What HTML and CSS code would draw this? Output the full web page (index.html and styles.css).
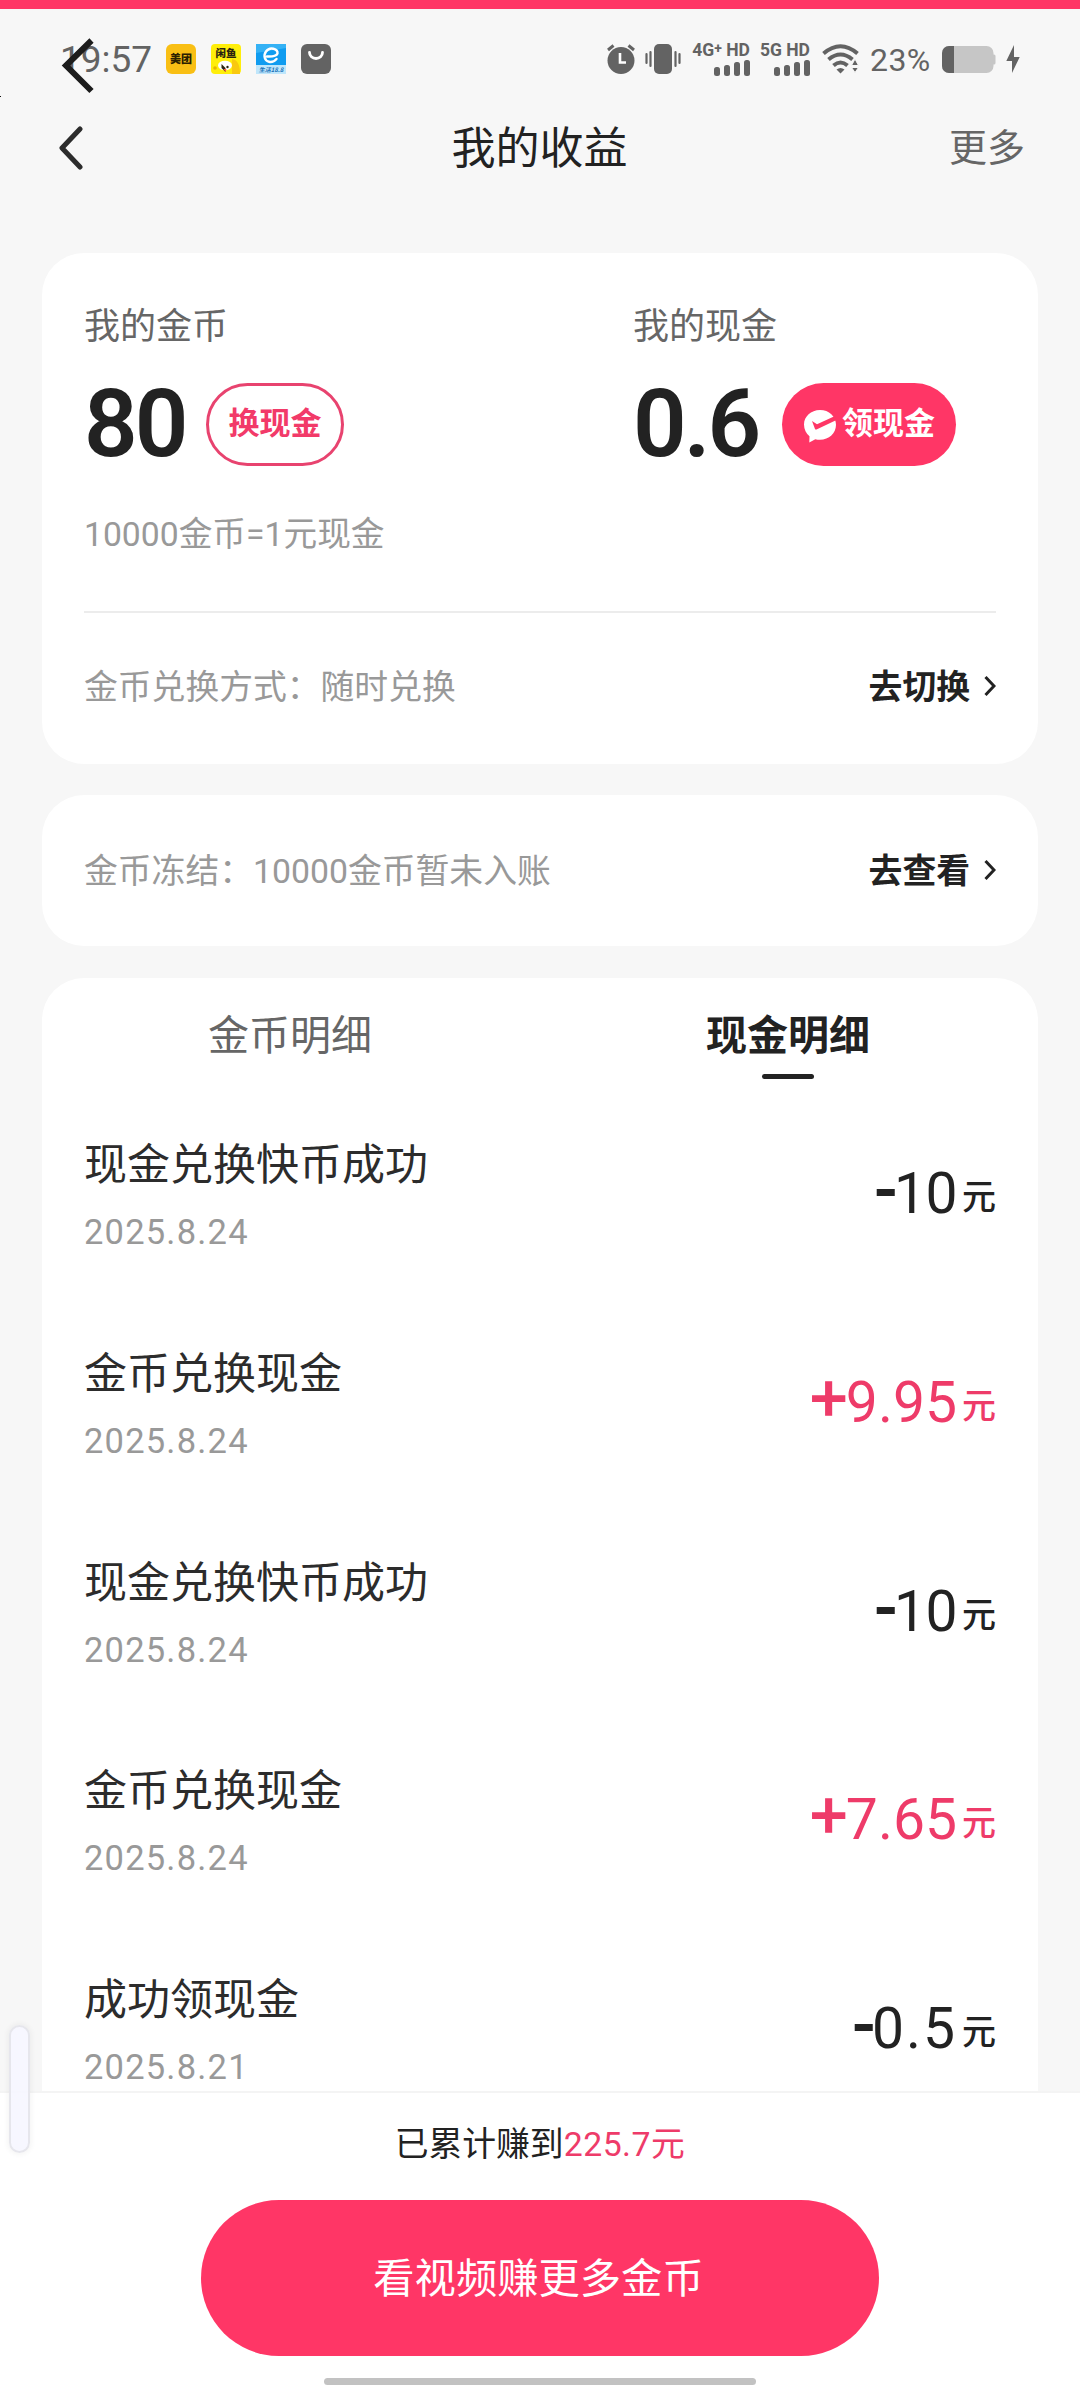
FILE: index.html
```html
<!DOCTYPE html>
<html lang="zh-CN">
<head>
<meta charset="utf-8">
<title>我的收益</title>
<link rel="stylesheet" href="styles.css">
</head>
<body>
<div class="screen">
  <div class="accent"></div>
  <div class="status">
    <span class="clock">19:57</span>
    <div class="apps">
      <svg width="30" height="30" viewBox="0 0 30 30"><rect width="30" height="30" rx="6" fill="#f9bf14"/><text x="15" y="19.2" text-anchor="middle" class="app-meituan">美团</text></svg>
      <svg width="30" height="30" viewBox="0 0 30 30"><rect width="30" height="30" rx="4" fill="#ffee0a"/><path d="M21 15q8 1 8 15h-8z" fill="#f9c90f"/><text x="15" y="12.5" text-anchor="middle" class="app-xianyu">闲鱼</text><ellipse cx="14" cy="21.500" rx="7" ry="4.800" fill="#fff"/><circle cx="4" cy="24" r="1.800" fill="#e8b500"/><path d="M10.500 20v4l4 4v-4z" fill="#2b2410"/><path d="M12.500 25l2 3 1-3z" fill="#ff5a3c"/><circle cx="16.500" cy="23" r="1.200" fill="#2b2410"/></svg>
      <svg width="30" height="30" viewBox="0 0 30 30"><rect width="30" height="30" fill="#109cf0"/><path d="M0 0h30v4L0 9z" fill="#35b2f5"/><rect y="21" width="30" height="9" fill="#bfe6fb"/><path d="M11 12.500q9 .5 10.500-3C22 5 14 2 10 7.500c-3 4.300-1.200 9.500 3 10.300 3 .6 5.500-.5 7.500-2.800" fill="none" stroke="#fff" stroke-width="2.400" stroke-linecap="round"/><text x="15" y="28" text-anchor="middle" class="app-eleme">生活18.8</text></svg>
      <svg width="30" height="30" viewBox="0 0 30 30"><rect width="30" height="30" rx="6" fill="#636363"/><path d="M8.500 8.500a6.500 6 0 0 0 13 0" fill="none" stroke="#fff" stroke-width="2.800" stroke-linecap="round"/></svg>
    </div>
    <div class="indicators">
      <svg class="ind-alarm" width="30" height="30" viewBox="0 0 30 30"><circle cx="15" cy="16.500" r="13.500" fill="#636363"/><path d="M2 6l5.500-4.500M22.500 1.500L28 6" stroke="#636363" stroke-width="3"/><path d="M14 9v9.500h6" fill="none" stroke="#fff" stroke-width="2.600"/></svg>
      <svg class="ind-vibrate" width="36" height="30" viewBox="0 0 36 30"><rect x="9" width="18" height="30" rx="5" fill="#636363"/><path d="M1.500 10v9M5.500 8v14M30.500 8v14M34.500 10v9" stroke="#636363" stroke-width="2.200" stroke-linecap="round"/></svg>
      <div class="signal sim-one"><span>4G<sup>+</sup> HD</span><i><b class="bar-1"></b><b class="bar-2"></b><b class="bar-3"></b><b class="bar-4"></b></i></div>
      <div class="signal sim-two"><span>5G HD</span><i><b class="bar-1"></b><b class="bar-2"></b><b class="bar-3"></b><b class="bar-4"></b></i></div>
      <svg class="ind-wifi" width="38" height="30" viewBox="0 0 38 30"><g fill="none" stroke="#636363" stroke-width="4"><path d="M1.500 9.500q17-14.500 34 0"/><path d="M6.500 15.500q12-10 24 0"/><path d="M11.500 21.500q7-6 14 0"/></g><path d="M14.500 25.500q4-3 8 0l-4 4z" fill="#636363"/><path d="M29.500 21.500l3.500-6.500 3.500 6.500zM29.500 23.500l3.500 5 3.500-5z" fill="#636363" stroke="#f7f7f7"/></svg>
      <span class="percent">23%</span>
      <svg class="ind-battery" width="54" height="27" viewBox="0 0 54 27"><rect x="50" y="8.500" width="3.500" height="10" rx="1.500" fill="#c6c6c6"/><rect width="51.500" height="27" rx="7" fill="#c6c6c6"/><path d="M12 0H7a7 7 0 0 0-7 7v13a7 7 0 0 0 7 7h5z" fill="#636363"/></svg>
      <svg class="ind-bolt" width="14" height="28" viewBox="0 0 14 28"><path d="M8 0L.3 16H6v12l7.700-16H8z" fill="#636363"/></svg>
    </div>
  </div>
  <header class="nav">
    <svg class="nav-back" width="28" height="44" viewBox="0 0 28 44"><path d="M23 3L5 22l18 19" fill="none" stroke="#2c2c2c" stroke-width="5" stroke-linecap="round" stroke-linejoin="round"/></svg>
    <h1>我的收益</h1>
    <a class="more">更多</a>
  </header>

  <main>
    <section class="card balance">
      <div class="columns">
        <div class="column">
          <div class="label">我的金币</div>
          <div class="figure"><span class="number">80</span><span class="pill outline">换现金</span></div>
        </div>
        <div class="column">
          <div class="label">我的现金</div>
          <div class="figure"><span class="number">0.6</span><span class="pill solid"><svg width="34" height="34" viewBox="0 0 34 34"><path d="M17 1C8 1 1 7.500 1 15.500c0 5 2.200 9 5.500 11.800L6.300 33.500l6-3.300c1.500.4 3 .6 4.700.6 9 0 16-6.500 16-15S26 1 17 1z" fill="#fff"/><path d="M9 12l5 3.200L32 7l1.500 4L13.500 20.500q-1 .4-1.500-.6z" fill="#ff3666"/></svg>领现金</span></div>
        </div>
      </div>
      <p class="rate">10000金币=1元现金</p>
      <div class="line-row method"><span>金币兑换方式：随时兑换</span><a>去切换<svg width="12" height="22" viewBox="0 0 12 22"><path d="M1.500 2l8.500 9-8.500 9" fill="none" stroke="#222" stroke-width="3"/></svg></a></div>
    </section>

    <section class="card line-row frozen"><span>金币冻结：10000金币暂未入账</span><a>去查看<svg width="12" height="22" viewBox="0 0 12 22"><path d="M1.500 2l8.500 9-8.500 9" fill="none" stroke="#222" stroke-width="3"/></svg></a></section>

    <section class="card details">
      <div class="tabs"><div class="tab">金币明细</div><div class="tab active">现金明细</div></div>
      <ul>
        <li><div><h2>现金兑换快币成功</h2><time>2025.8.24</time></div><p class="amount"><b class="minus">-</b>10<em>元</em></p></li>
        <li><div><h2>金币兑换现金</h2><time>2025.8.24</time></div><p class="amount gain"><b>+</b>9.95<em>元</em></p></li>
        <li><div><h2>现金兑换快币成功</h2><time>2025.8.24</time></div><p class="amount"><b class="minus">-</b>10<em>元</em></p></li>
        <li><div><h2>金币兑换现金</h2><time>2025.8.24</time></div><p class="amount gain"><b>+</b>7.65<em>元</em></p></li>
        <li><div><h2>成功领现金</h2><time>2025.8.21</time></div><p class="amount decimal"><b class="minus">-</b>0.5<em>元</em></p></li>
      </ul>
    </section>
  </main>

  <footer>
    <p>已累计赚到<span>225.7元</span></p>
    <button type="button">看视频赚更多金币</button>
    <div class="home-bar"></div>
  </footer>

  <svg class="overlay-back" width="34" height="58" viewBox="0 0 34 58"><path d="M30.500 3.500L5 28.500l25.500 25.500" fill="none" stroke="#1c1c1c" stroke-width="6"/></svg>
  <div class="edge-mark"></div>
  <div class="side-handle"></div>
</div>
</body>
</html>
```
FILE: styles.css
```css
* { box-sizing: border-box; margin: 0; padding: 0; }
body { background: #f7f7f7; font-family: Roboto, "Noto Sans CJK SC", sans-serif; color: #222; }
svg { display: block; flex: none; }
.screen { position: relative; width: 1080px; height: 2388px; overflow: hidden; display: flex; flex-direction: column; background: #f7f7f7; }
.accent { height: 9px; background: #ff3666; flex: none; }

.status { height: 100px; flex: none; display: flex; align-items: center; padding: 0 60px; color: #636363; font-family: Roboto, sans-serif; }
.clock { font-size: 37px; width: 106px; line-height: 42px; padding-top: 2px; }
.apps { display: flex; gap: 15px; }
.app-meituan { font: 900 11px "Noto Sans CJK SC", sans-serif; fill: #2b2000; }
.app-xianyu { font: 900 10.5px "Noto Sans CJK SC", sans-serif; fill: #2b2410; }
.app-eleme { font: italic 700 6px "Noto Sans CJK SC", sans-serif; fill: #1470b8; }
.indicators { display: flex; align-items: center; margin-left: auto; }
.ind-vibrate { margin-left: 9px; }
.signal { height: 33px; display: flex; flex-direction: column; align-items: flex-end; justify-content: space-between; font: 700 17.5px/14px Roboto, sans-serif; white-space: nowrap; }
.signal sup { font-size: 14px; line-height: 0; vertical-align: 3px; }
.signal i { display: flex; align-items: flex-end; gap: 4px; height: 16px; }
.signal b { width: 6px; border-radius: 2.5px; background: #636363; }
.bar-1 { height: 9px; }
.bar-2 { height: 11px; }
.bar-3 { height: 14px; }
.bar-4 { height: 16px; }
.sim-one { width: 58px; margin-left: 11px; }
.sim-two { width: 49px; margin-left: 11px; }
.ind-wifi { margin-left: 12px; }
.percent { width: 65px; margin-left: 10px; font-size: 32px; font-weight: 400; letter-spacing: .4px; line-height: 38px; padding-top: 2px; }
.ind-battery { margin-left: 7px; }
.ind-bolt { margin-left: 10px; }

.nav { height: 78px; flex: none; display: grid; grid-template-columns: 200px 1fr 200px; align-items: center; padding: 0 55px 0 57px; }
h1 { font-size: 44px; font-weight: 400; line-height: 60px; text-align: center; margin: 1px 3px 0 0; }
.more { font-size: 38px; line-height: 60px; color: #666; text-align: right; margin-top: -1px; }

main { flex: none; height: 1904px; padding: 66px 42px 0; display: flex; flex-direction: column; overflow: hidden; }
.card { background: #fff; border-radius: 42px; flex: none; }
.balance { height: 511px; padding: 49px 42px 0; }
.columns { display: grid; grid-template-columns: 549px 1fr; }
.label { font-size: 36px; line-height: 50px; color: #666; }
.figure { display: flex; align-items: center; height: 84px; margin-top: 30px; }
.number { width: 104px; font-size: 94px; font-weight: 600; line-height: 84px; letter-spacing: -3px; }
.column:last-child .number { width: 131px; }
.pill { height: 83px; border-radius: 42px; display: flex; align-items: center; justify-content: center; font-size: 31px; line-height: 40px; font-weight: 700; }
.outline { width: 138px; border: 3px solid #e8436f; color: #f23a69; margin-left: 18px; }
.solid { width: 174px; background: #ff3666; color: #fff; gap: 5px; margin-left: 18px; }
.solid svg { margin-top: 3px; }
.rate { height: 103px; margin-top: 44px; font-size: 33.7px; line-height: 50px; color: #999; border-bottom: 2px solid #ececec; }
.line-row { display: flex; align-items: center; justify-content: space-between; font-size: 33.8px; color: #999; }
.line-row span, .line-row a { padding-bottom: 5px; }
.line-row a { display: flex; align-items: center; gap: 14px; color: #222; font-weight: 700; }
.line-row svg { margin-top: 4px; }
.method { height: 147px; }
.frozen { height: 151px; margin-top: 31px; padding: 0 42px; }
.details { height: 1200px; margin-top: 32px; }
.tabs { display: grid; grid-template-columns: 1fr 1fr; height: 118px; }
.tab { display: flex; flex-direction: column; align-items: center; padding: 28px 2px 0 0; font-size: 41px; line-height: 60px; color: #666; }
.active { font-weight: 700; color: #222; }
.active::after { content: ""; width: 52px; height: 5px; margin-top: 8px; border-radius: 3px; background: #222; }
ul { list-style: none; padding: 0 42px; }
li { height: 208.8px; display: flex; justify-content: space-between; }
h2 { margin-top: 39px; font-size: 43px; line-height: 60px; font-weight: 400; color: #2c2c2c; }
time { display: block; margin-top: 12px; font-size: 34.5px; line-height: 50px; color: #999; letter-spacing: 1.2px; }
.amount { margin-top: 58px; font-size: 57px; font-weight: 400; line-height: 80px; white-space: nowrap; letter-spacing: -.5px; }
.amount b { font: 700 65px "Noto Sans CJK SC", sans-serif; line-height: 0; vertical-align: -1px; letter-spacing: -2px; }
.amount .minus { font-size: 66px; vertical-align: 2px; letter-spacing: 0; margin-right: -4px; }
.amount em { font-style: normal; font-size: 34px; font-weight: 500; line-height: 0; margin-left: 5px; vertical-align: 4px; letter-spacing: 0; }
.gain { color: #ee3b69; letter-spacing: 0; }
.decimal { letter-spacing: 2px; }

footer { flex: none; height: 297px; background: #fff; border-top: 2px solid #f4f4f4; display: flex; flex-direction: column; align-items: center; }
footer p { margin-top: 27px; height: 50px; font-size: 33.8px; line-height: 50px; }
footer p span { color: #ee3b69; letter-spacing: .5px; }
button { width: 678px; height: 156px; margin-top: 30px; padding: 0 3px 7px 0; border: 0; border-radius: 78px; background: #ff3666; color: #fff; font: 400 41.3px "Noto Sans CJK SC", sans-serif; }
.home-bar { width: 432px; height: 7px; margin-top: 22px; border-radius: 4px; background: #c2c2c2; }

.overlay-back { position: absolute; left: 61px; top: 37px; }
.edge-mark { position: absolute; left: 0; top: 96px; width: 1px; height: 1px; background: #111; }
.side-handle { position: absolute; left: 9px; top: 2025px; width: 21px; height: 128px; border-radius: 11px; background: rgba(246, 246, 255, .9); border: 2px solid #e6e6ec; box-shadow: 0 0 5px 2px rgba(0, 0, 0, .04); }
```
